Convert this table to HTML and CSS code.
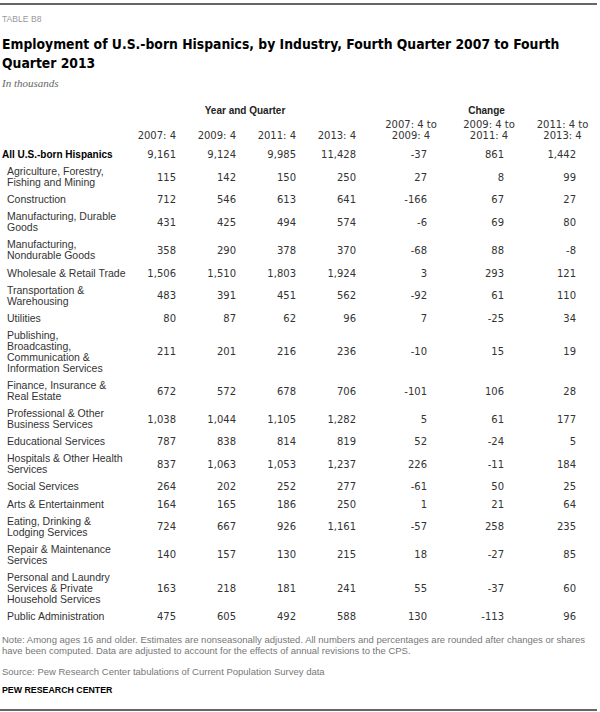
FILE: index.html
```html
<!DOCTYPE html>
<html>
<head>
<meta charset="utf-8">
<link rel="stylesheet" href="styles.css">
</head>
<body>
<div class="page">
  <div class="rule"></div>
  <div class="kicker">TABLE B8</div>
  <h1 class="title">Employment of U.S.-born Hispanics, by Industry, Fourth Quarter 2007 to Fourth Quarter 2013</h1>
  <div class="subtitle">In thousands</div>
  <table class="data">
    <colgroup>
      <col class="w-label"><col class="w-y1"><col class="w-y"><col class="w-y"><col class="w-y"><col class="w-c1"><col class="w-c2"><col class="w-c3">
    </colgroup>
    <thead>
      <tr class="grp-row">
        <th></th>
        <th colspan="4" class="grp">Year and Quarter</th>
        <th colspan="3" class="grp grp-change">Change</th>
      </tr>
      <tr class="col-row">
        <th></th>
        <th class="yr">2007: 4</th>
        <th class="yr">2009: 4</th>
        <th class="yr">2011: 4</th>
        <th class="yr">2013: 4</th>
        <th class="ch">2007: 4 to<br>2009: 4</th>
        <th class="ch">2009: 4 to<br>2011: 4</th>
        <th class="ch ch3">2011: 4 to<br>2013: 4</th>
      </tr>
    </thead>
    <tbody>
      <tr class="total"><td class="label">All U.S.-born Hispanics</td><td>9,161</td><td>9,124</td><td>9,985</td><td>11,428</td><td class="c1">-37</td><td class="c2">861</td><td class="c3">1,442</td></tr>
      <tr><td class="label">Agriculture, Forestry,<br>Fishing and Mining</td><td>115</td><td>142</td><td>150</td><td>250</td><td class="c1">27</td><td class="c2">8</td><td class="c3">99</td></tr>
      <tr><td class="label">Construction</td><td>712</td><td>546</td><td>613</td><td>641</td><td class="c1">-166</td><td class="c2">67</td><td class="c3">27</td></tr>
      <tr><td class="label">Manufacturing, Durable<br>Goods</td><td>431</td><td>425</td><td>494</td><td>574</td><td class="c1">-6</td><td class="c2">69</td><td class="c3">80</td></tr>
      <tr><td class="label">Manufacturing,<br>Nondurable Goods</td><td>358</td><td>290</td><td>378</td><td>370</td><td class="c1">-68</td><td class="c2">88</td><td class="c3">-8</td></tr>
      <tr><td class="label">Wholesale &amp; Retail Trade</td><td>1,506</td><td>1,510</td><td>1,803</td><td>1,924</td><td class="c1">3</td><td class="c2">293</td><td class="c3">121</td></tr>
      <tr><td class="label">Transportation &amp;<br>Warehousing</td><td>483</td><td>391</td><td>451</td><td>562</td><td class="c1">-92</td><td class="c2">61</td><td class="c3">110</td></tr>
      <tr><td class="label">Utilities</td><td>80</td><td>87</td><td>62</td><td>96</td><td class="c1">7</td><td class="c2">-25</td><td class="c3">34</td></tr>
      <tr><td class="label">Publishing,<br>Broadcasting,<br>Communication &amp;<br>Information Services</td><td>211</td><td>201</td><td>216</td><td>236</td><td class="c1">-10</td><td class="c2">15</td><td class="c3">19</td></tr>
      <tr><td class="label">Finance, Insurance &amp;<br>Real Estate</td><td>672</td><td>572</td><td>678</td><td>706</td><td class="c1">-101</td><td class="c2">106</td><td class="c3">28</td></tr>
      <tr><td class="label">Professional &amp; Other<br>Business Services</td><td>1,038</td><td>1,044</td><td>1,105</td><td>1,282</td><td class="c1">5</td><td class="c2">61</td><td class="c3">177</td></tr>
      <tr><td class="label">Educational Services</td><td>787</td><td>838</td><td>814</td><td>819</td><td class="c1">52</td><td class="c2">-24</td><td class="c3">5</td></tr>
      <tr><td class="label">Hospitals &amp; Other Health<br>Services</td><td>837</td><td>1,063</td><td>1,053</td><td>1,237</td><td class="c1">226</td><td class="c2">-11</td><td class="c3">184</td></tr>
      <tr><td class="label">Social Services</td><td>264</td><td>202</td><td>252</td><td>277</td><td class="c1">-61</td><td class="c2">50</td><td class="c3">25</td></tr>
      <tr><td class="label">Arts &amp; Entertainment</td><td>164</td><td>165</td><td>186</td><td>250</td><td class="c1">1</td><td class="c2">21</td><td class="c3">64</td></tr>
      <tr><td class="label">Eating, Drinking &amp;<br>Lodging Services</td><td>724</td><td>667</td><td>926</td><td>1,161</td><td class="c1">-57</td><td class="c2">258</td><td class="c3">235</td></tr>
      <tr><td class="label">Repair &amp; Maintenance<br>Services</td><td>140</td><td>157</td><td>130</td><td>215</td><td class="c1">18</td><td class="c2">-27</td><td class="c3">85</td></tr>
      <tr><td class="label">Personal and Laundry<br>Services &amp; Private<br>Household Services</td><td>163</td><td>218</td><td>181</td><td>241</td><td class="c1">55</td><td class="c2">-37</td><td class="c3">60</td></tr>
      <tr><td class="label">Public Administration</td><td>475</td><td>605</td><td>492</td><td>588</td><td class="c1">130</td><td class="c2">-113</td><td class="c3">96</td></tr>
    </tbody>
  </table>
  <p class="note">Note: Among ages 16 and older. Estimates are nonseasonally adjusted. All numbers and percentages are rounded after changes or shares have been computed. Data are adjusted to account for the effects of annual revisions to the CPS.</p>
  <p class="source">Source: Pew Research Center tabulations of Current Population Survey data</p>
  <p class="brand">PEW RESEARCH CENTER</p>
  <div class="rule rule-bottom"></div>
</div>
</body>
</html>
```

FILE: styles.css
```css
html, body {
  margin: 0;
  padding: 0;
  background: #fff;
}

.page {
  width: 597px;
  font-family: "Liberation Sans", Arial, sans-serif;
  color: #333;
  padding-top: 3px;
}

.rule {
  height: 2px;
  background: #666;
}

.kicker {
  margin: 9px 0 0 2px;
  font-size: 8.6px;
  line-height: 10px;
  color: #999;
}

.title {
  margin: 11px 0 0 2px;
  font-family: "DejaVu Sans Condensed", "Liberation Sans", sans-serif;
  font-stretch: condensed;
  font-weight: bold;
  font-size: 13.8px;
  line-height: 19px;
  color: #000;
}

.subtitle {
  margin: 4px 0 0 2px;
  font-family: "Liberation Serif", serif;
  font-style: italic;
  font-size: 11px;
  line-height: 13px;
  color: #666;
}

.data {
  width: 600px;
  table-layout: fixed;
  border-collapse: collapse;
  border-spacing: 0;
  margin-top: 15px;
  font-size: 10px;
  line-height: 11px;
  color: #333;
}

.w-label { width: 130px; }
.w-y1 { width: 50px; }
.w-y { width: 60px; }
.w-c1 { width: 102px; }
.w-c2 { width: 54px; }
.w-c3 { width: 84px; }

.data th {
  font-weight: normal;
  padding: 0;
}

.grp-row th.grp {
  font-weight: bold;
  color: #222;
  text-align: center;
  padding: 0;
}

.grp-change {
  padding-left: 13px !important;
}

.col-row th {
  font-family: "DejaVu Sans", sans-serif;
  vertical-align: bottom;
  padding: 3px 4px 5px 0;
}

.col-row th.yr {
  text-align: right;
}

.col-row th.ch {
  text-align: center;
  padding-right: 0;
}

.col-row th.ch3 {
  padding-left: 9px;
}

.data td {
  font-family: "DejaVu Sans", sans-serif;
  line-height: 11.06px;
  padding: 3px 4px 3px 0;
  text-align: right;
  vertical-align: middle;
  white-space: nowrap;
}

.data td.label {
  font-family: "Liberation Sans", Arial, sans-serif;
  font-size: 10.5px;
  text-align: left;
  padding-left: 7px;
  padding-right: 0;
}

.data tr.total td.label {
  font-size: 10px;
  font-weight: bold;
  color: #000;
  padding-left: 2px;
}

.data td.c1 { padding-right: 35px; }
.data td.c2 { padding-right: 12px; }
.data td.c3 { padding-right: 24px; }

.note, .source, .brand {
  margin: 0 0 0 2px;
  font-size: 9.5px;
  line-height: 11px;
  color: #777;
}

.note {
  margin-top: 9px;
}

.source {
  margin-top: 10px;
}

.brand {
  margin-top: 8px;
  font-size: 8.8px;
  font-weight: bold;
  color: #000;
}

.rule-bottom {
  margin-top: 13px;
}
```
